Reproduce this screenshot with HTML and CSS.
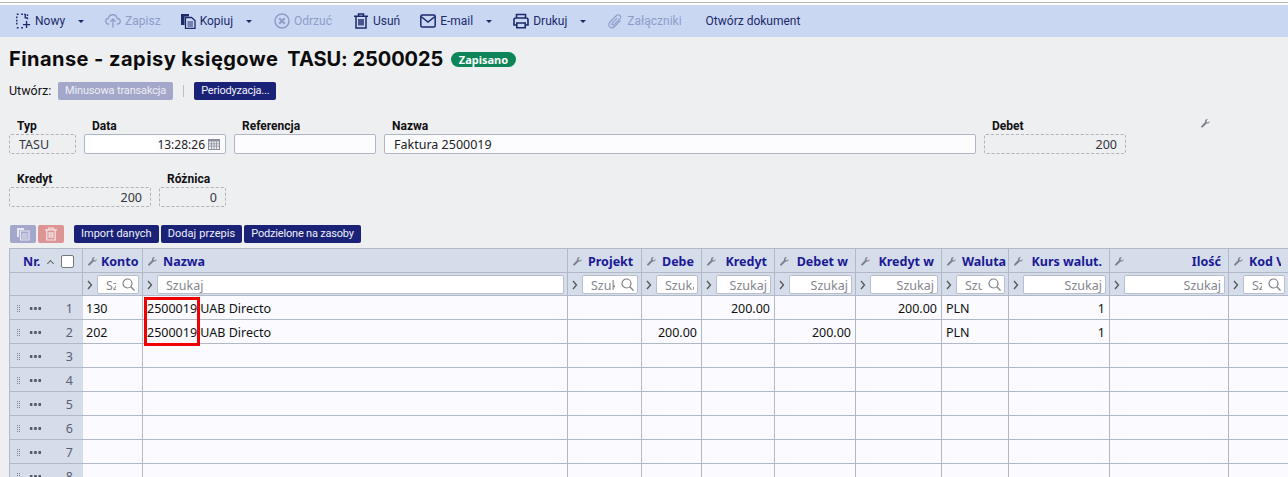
FILE: index.html
```html
<!DOCTYPE html>
<html lang="pl">
<head>
<meta charset="utf-8">
<title>Finanse - zapisy księgowe</title>
<link rel="stylesheet" href="styles.css">
</head>
<body>
<svg class="defs" width="0" height="0" aria-hidden="true">
  <symbol id="wrench" viewBox="0 0 10 10"><path d="M9.600 2.100 7.900 3.800 6.400 3.500 6.100 2 7.800.4C6.500-.1 5 .4 4.600 1.600c-.2.600-.2 1.100 0 1.600L.4 7.700c-.5.5-.5 1.200 0 1.600.4.5 1.100.5 1.600 0l4.200-4.300c1.700.5 3.700-.9 3.400-2.900z"/></symbol>
  <symbol id="chev" viewBox="0 0 6 10"><path d="M1 1l3.500 4L1 9" fill="none" stroke="currentColor" stroke-width="1.300"/></symbol>
</svg>

<div class="topline"></div>
<nav class="toolbar">
  <span class="tool"><svg class="ic" viewBox="0 0 16 18"><path d="M6 1.500h4.500M1 1.500h2M1 4v10M1 16.500h2M6 16.500h3M13 1.500V7" fill="none" stroke="currentColor" stroke-width="1.600" stroke-dasharray="2 1.500"/><path d="M10.500 1v4.500H13M12 9v8M8 13h8" fill="none" stroke="currentColor" stroke-width="1.500"/></svg>Nowy</span>
  <span class="caret"></span>
  <span class="tool off"><svg class="ic" viewBox="0 0 18 16"><path d="M5 11.500H4C2 11.500.8 10 .8 8.300c0-1.600 1.200-3 2.800-3.100C4.200 2.800 6.200 1 8.700 1c2.600 0 4.600 1.800 5 4.200 1.900 0 3.500 1.400 3.500 3.200 0 1.700-1.300 3.100-3.200 3.100H13" fill="none" stroke="currentColor" stroke-width="1.500"/><path d="M9 15.500V6M5.800 9 9 5.800 12.200 9" fill="none" stroke="currentColor" stroke-width="1.500"/></svg>Zapisz</span>
  <span class="tool gap-l"><svg class="ic" viewBox="0 0 16 16"><path d="M1 1h8v2.500H4.500V12H1z" fill="currentColor"/><path d="M5.500 4.500h6l3.500 3V15.500H5.500z" fill="#c9d7f3" stroke="currentColor" stroke-width="1.300"/><path d="M7.500 9h5.500M7.500 11h5.500M7.500 13h5.500" stroke="currentColor" stroke-width="1.200"/></svg>Kopiuj</span>
  <span class="caret"></span>
  <span class="tool off nudge"><svg class="ic" viewBox="0 0 16 16"><circle cx="8" cy="8" r="7" fill="none" stroke="currentColor" stroke-width="1.500"/><path d="M5.200 5.200l5.600 5.600M10.800 5.200l-5.600 5.600" stroke="currentColor" stroke-width="2"/></svg>Odrzuć</span>
  <span class="tool gap-m"><svg class="ic" viewBox="0 0 16 16"><path d="M1 3.200h14M5.500 3V1h5v2M3 3.500V15h10V3.500M6 6v6.500M8 6v6.500M10 6v6.500" fill="none" stroke="currentColor" stroke-width="1.500"/></svg>Usuń</span>
  <span class="tool gap-s"><svg class="ic" viewBox="0 0 16 14"><rect x=".8" y="1" width="14.400" height="12" rx="1.500" fill="none" stroke="currentColor" stroke-width="1.500"/><path d="M1 2.500 8 8l7-5.500" fill="none" stroke="currentColor" stroke-width="1.500"/></svg>E-mail</span>
  <span class="caret"></span>
  <span class="tool"><svg class="ic" viewBox="0 0 16 16"><path d="M3.500 5V1.500h9V5M3.500 12H1V6.800C1 5.800 1.800 5 2.800 5h10.400c1 0 1.800.8 1.800 1.800V12h-2.500" fill="none" stroke="currentColor" stroke-width="1.600"/><path d="M3.800 10h8.400v4.800H3.800z" fill="none" stroke="currentColor" stroke-width="1.600"/></svg>Drukuj</span>
  <span class="caret"></span>
  <span class="tool off"><svg class="ic" viewBox="0 0 16 16"><path d="M13.500 7.500 7.500 13.500c-1.500 1.500-3.600 1.500-4.800.3s-1.200-3.300.3-4.800l6.500-6.500c1-1 2.500-1 3.400-.1s.9 2.400-.1 3.400l-6 6c-.5.500-1.200.5-1.700.1s-.4-1.200.1-1.700l5-5" fill="none" stroke="currentColor" stroke-width="1.200"/></svg>Załączniki</span>
  <span class="tool plain">Otwórz dokument</span>
</nav>

<main class="page">
  <header class="title-row">
    <h1 class="title">Finanse - zapisy księgowe</h1>
    <span class="doc">TASU: 2500025</span>
    <span class="badge">Zapisano</span>
  </header>

  <div class="create-row">
    <span class="create-label">Utwórz:</span>
    <button class="btn btn-off" type="button">Minusowa transakcja</button>
    <span class="sep"></span>
    <button class="btn squeeze" type="button">Periodyzacja...</button>
  </div>

  <section class="form-row">
    <div class="field f-typ"><label>Typ</label><div class="ro">TASU</div></div>
    <div class="field f-wide"><label>Data</label><div class="inp date"><span class="mask"></span><span class="time">13:28:26</span><svg class="cal" viewBox="0 0 12 12"><path d="M0 1h12v11H0z" fill="#8b8f9c"/><path d="M1 3.500h10V11H1z" fill="#eef0f5"/><path d="M1 5.800h10M1 8.200h10M3.500 3.500V11M6 3.500V11M8.500 3.500V11" stroke="#8b8f9c" stroke-width=".8"/></svg></div></div>
    <div class="field f-wide"><label>Referencja</label><div class="inp"></div></div>
    <div class="field f-name"><label>Nazwa</label><div class="inp">Faktura 2500019</div></div>
    <div class="field f-wide"><label>Debet</label><div class="ro right">200</div></div>
    <svg class="wrench w-form"><use href="#wrench"/></svg>
  </section>
  <section class="form-row row2">
    <div class="field f-wide"><label>Kredyt</label><div class="ro right">200</div></div>
    <div class="field f-typ"><label>Różnica</label><div class="ro right">0</div></div>
  </section>

  <div class="actions">
    <button class="sq sq-blue" type="button"><svg viewBox="0 0 14 14" width="14" height="14"><path d="M1 1h7v2H3v7H1z" fill="#e6e8f2"/><path d="M4.500 4h8.500v9H4.500z" fill="none" stroke="#e6e8f2" stroke-width="1.200"/><path d="M6 7h5.500M6 9h5.500M6 11h5.500" stroke="#e6e8f2"/></svg></button>
    <button class="sq sq-red" type="button"><svg viewBox="0 0 14 14" width="14" height="14"><path d="M1 2.800h12M4.800 2.600V1h4.400v1.600M2.800 3v10h8.400V3M5.200 5v6M7 5v6M8.800 5v6" fill="none" stroke="#f6e6e6" stroke-width="1.200"/></svg></button>
    <button class="btn first" type="button">Import danych</button>
    <button class="btn widen" type="button">Dodaj przepis</button>
    <button class="btn squeeze" type="button">Podzielone na zasoby</button>
  </div>

  <div class="grid-wrap">
    <table class="grid">
      <colgroup>
        <col class="c-nr"><col class="c-konto"><col class="c-nazwa"><col class="c-proj"><col class="c-deb"><col class="c-kre"><col class="c-debw"><col class="c-krew"><col class="c-wal"><col class="c-kurs"><col class="c-ilo"><col class="c-kod">
      </colgroup>
      <thead>
        <tr class="hd">
          <th><div class="nrh"><span class="nr-t">Nr.</span><span class="sort"></span><span class="check"></span></div></th>
          <th><div class="h tight"><svg class="wrench"><use href="#wrench"/></svg><span>Konto</span></div></th>
          <th><div class="h"><svg class="wrench"><use href="#wrench"/></svg><span>Nazwa</span></div></th>
          <th><div class="h"><svg class="wrench"><use href="#wrench"/></svg><span>Projekt</span></div></th>
          <th><div class="h"><svg class="wrench"><use href="#wrench"/></svg><span class="clip">Debet</span></div></th>
          <th><div class="h r"><svg class="wrench"><use href="#wrench"/></svg><span>Kredyt</span></div></th>
          <th><div class="h r"><svg class="wrench"><use href="#wrench"/></svg><span>Debet w</span></div></th>
          <th><div class="h r"><svg class="wrench"><use href="#wrench"/></svg><span>Kredyt w</span></div></th>
          <th><div class="h"><svg class="wrench"><use href="#wrench"/></svg><span>Waluta</span></div></th>
          <th><div class="h r"><svg class="wrench"><use href="#wrench"/></svg><span>Kurs walut.</span></div></th>
          <th><div class="h r"><svg class="wrench"><use href="#wrench"/></svg><span>Ilość</span></div></th>
          <th><div class="h"><svg class="wrench"><use href="#wrench"/></svg><span class="clip">Kod VAT</span></div></th>
        </tr>
        <tr class="flt">
          <th></th>
          <th><div class="f"><svg class="chev"><use href="#chev"/></svg><div class="s ico"><input placeholder="Szukaj"><svg class="mag" viewBox="0 0 13 13"><circle cx="5.500" cy="5.500" r="4.500" fill="none" stroke="currentColor" stroke-width="1.200"/><path d="M8.800 8.800 12.500 12.500" stroke="currentColor" stroke-width="1.300"/></svg></div></div></th>
          <th><div class="f"><svg class="chev"><use href="#chev"/></svg><div class="s"><input placeholder="Szukaj"></div></div></th>
          <th><div class="f"><svg class="chev"><use href="#chev"/></svg><div class="s ico"><input placeholder="Szukaj"><svg class="mag" viewBox="0 0 13 13"><circle cx="5.500" cy="5.500" r="4.500" fill="none" stroke="currentColor" stroke-width="1.200"/><path d="M8.800 8.800 12.500 12.500" stroke="currentColor" stroke-width="1.300"/></svg></div></div></th>
          <th><div class="f"><svg class="chev"><use href="#chev"/></svg><div class="s"><input placeholder="Szukaj"></div></div></th>
          <th><div class="f"><svg class="chev"><use href="#chev"/></svg><div class="s rt"><input placeholder="Szukaj"></div></div></th>
          <th><div class="f"><svg class="chev"><use href="#chev"/></svg><div class="s rt"><input placeholder="Szukaj"></div></div></th>
          <th><div class="f"><svg class="chev"><use href="#chev"/></svg><div class="s rt"><input placeholder="Szukaj"></div></div></th>
          <th><div class="f"><svg class="chev"><use href="#chev"/></svg><div class="s ico"><input placeholder="Szukaj"><svg class="mag" viewBox="0 0 13 13"><circle cx="5.500" cy="5.500" r="4.500" fill="none" stroke="currentColor" stroke-width="1.200"/><path d="M8.800 8.800 12.500 12.500" stroke="currentColor" stroke-width="1.300"/></svg></div></div></th>
          <th><div class="f"><svg class="chev"><use href="#chev"/></svg><div class="s rt"><input placeholder="Szukaj"></div></div></th>
          <th><div class="f"><svg class="chev"><use href="#chev"/></svg><div class="s rt"><input placeholder="Szukaj"></div></div></th>
          <th><div class="f"><svg class="chev"><use href="#chev"/></svg><div class="s ico"><input placeholder="Szukaj"><svg class="mag" viewBox="0 0 13 13"><circle cx="5.500" cy="5.500" r="4.500" fill="none" stroke="currentColor" stroke-width="1.200"/><path d="M8.800 8.800 12.500 12.500" stroke="currentColor" stroke-width="1.300"/></svg></div></div></th>
        </tr>
      </thead>
      <tbody>
        <tr><th class="n"><div class="nrc"><i class="drag"></i><i class="dots"></i><b>1</b></div></th><td>130</td><td>2500019 UAB Directo</td><td></td><td></td><td class="num">200.00</td><td></td><td class="num">200.00</td><td>PLN</td><td class="num">1</td><td></td><td></td></tr>
        <tr><th class="n"><div class="nrc"><i class="drag"></i><i class="dots"></i><b>2</b></div></th><td>202</td><td>2500019 UAB Directo</td><td></td><td class="num">200.00</td><td></td><td class="num">200.00</td><td></td><td>PLN</td><td class="num">1</td><td></td><td></td></tr>
        <tr><th class="n"><div class="nrc"><i class="drag"></i><i class="dots"></i><b>3</b></div></th><td></td><td></td><td></td><td></td><td></td><td></td><td></td><td></td><td></td><td></td><td></td></tr>
        <tr><th class="n"><div class="nrc"><i class="drag"></i><i class="dots"></i><b>4</b></div></th><td></td><td></td><td></td><td></td><td></td><td></td><td></td><td></td><td></td><td></td><td></td></tr>
        <tr><th class="n"><div class="nrc"><i class="drag"></i><i class="dots"></i><b>5</b></div></th><td></td><td></td><td></td><td></td><td></td><td></td><td></td><td></td><td></td><td></td><td></td></tr>
        <tr><th class="n"><div class="nrc"><i class="drag"></i><i class="dots"></i><b>6</b></div></th><td></td><td></td><td></td><td></td><td></td><td></td><td></td><td></td><td></td><td></td><td></td></tr>
        <tr><th class="n"><div class="nrc"><i class="drag"></i><i class="dots"></i><b>7</b></div></th><td></td><td></td><td></td><td></td><td></td><td></td><td></td><td></td><td></td><td></td><td></td></tr>
        <tr><th class="n"><div class="nrc"><i class="drag"></i><i class="dots"></i><b>8</b></div></th><td></td><td></td><td></td><td></td><td></td><td></td><td></td><td></td><td></td><td></td><td></td></tr>
      </tbody>
    </table>
    <div class="redbox"></div>
  </div>
</main>
</body>
</html>
```

FILE: styles.css
```css
* { box-sizing: border-box; }
html, body { margin: 0; height: 477px; overflow: hidden; }
body { background: #eeeff1; color: #111; font: 12.5px/16px "Noto Sans", "Open Sans", sans-serif; }
.defs { position: absolute; }
button { font: inherit; border: 0; cursor: pointer; }

.topline { height: 5px; background: #fff; border-top: 2px solid #fff; }
.topline::before { content: ""; display: block; height: 1px; background: #b8b8b8; }

.toolbar { height: 32px; background: #c9d7f3; display: flex; align-items: center; padding-left: 15px; color: #1c2a6b; font: 12px/16px Roboto, "Noto Sans", sans-serif; }
.tool { display: inline-flex; align-items: center; gap: 4px; white-space: nowrap; }
.ic { width: 16px; height: 16px; flex: none; }
.off { color: #8f9dc9; }
.caret { width: 0; height: 0; border: 3px solid transparent; border-top: 3px solid #1c2a6b; border-bottom: 0; margin: 0 21px 0 13px; }
.gap-l { margin-left: 19px; }
.gap-m { margin-left: 21px; }
.gap-s { margin-left: 20px; }
.nudge { margin-left: 1px; }
.plain { margin-left: 24px; }

.page { padding: 0 0 0 9px; }
.title-row { display: flex; align-items: center; height: 30px; margin-top: 7px; }
.title, .doc { margin: 0; font: 700 20px/30px Inter, "Liberation Sans", sans-serif; letter-spacing: .45px; color: #0c0c0c; }
.doc { margin-left: 9px; letter-spacing: -.05px; }
.badge { margin-left: 8px; height: 15px; padding: 0 7.500px; border-radius: 8px; background: #0d8559; color: #fff; font: 700 11px/15px "Noto Sans", sans-serif; }

.create-row { display: flex; align-items: center; height: 18px; margin-top: 8px; }
.create-label { width: 49px; font: 12.500px/16px Roboto, sans-serif; }
.btn { height: 18px; padding: 0 7px; border-radius: 2px; background: #1a2277; color: #eef0fa; font: 11px/18px Roboto, sans-serif; white-space: nowrap; }
.btn-off { background: #a3a7c9; color: #eceef6; letter-spacing: -.15px; }
.squeeze { letter-spacing: -.2px; }
.widen { letter-spacing: .08px; }
.sep { width: 1px; height: 12px; margin: 0 10px; background: #b5c0cc; }

.form-row { display: flex; gap: 8px; margin-top: 19px; position: relative; }
.row2 { margin-top: 18px; }
.field { display: flex; flex-direction: column; }
.field label { height: 15px; padding-left: 8px; font: 700 12px/15px Roboto, sans-serif; color: #111; }
.f-typ { width: 67px; }
.f-wide { width: 142px; }
.f-name { width: 592px; }
.ro, .inp { height: 20px; padding: 0 9px; line-height: 19px; }
.ro { border: 1px dashed #b1b4bc; border-radius: 2px; color: #33363f; }
.right { text-align: right; padding-right: 8px; }
.inp { border: 1px solid #aeb5c6; border-radius: 2px; background: #fcfcff; color: #222; }
.date { display: flex; justify-content: flex-end; align-items: center; padding-right: 5px; gap: 3px; position: relative; }
.time { font-size: 12px; }
.mask { position: absolute; left: 7px; top: 1px; width: 64px; height: 16px; background: #fff; }
.cal { width: 12px; height: 12px; }
.wrench { width: 9px; height: 9px; fill: #7d808c; flex: none; }
.w-form { position: absolute; left: 1192px; top: 0; }

.actions { display: flex; gap: 2px; margin-top: 18px; height: 18px; margin-left: 1px; }
.sq { width: 26px; height: 18px; padding: 2px 0 0; border-radius: 2px; }
.sq-blue { background: #a3a7c9; }
.sq-red { background: #dc9494; }
.first { margin-left: 8px; }

.grid-wrap { position: relative; margin-top: 5px; width: 1279px; }
.grid { border-collapse: collapse; table-layout: fixed; width: 1279px; }
.c-nr { width: 73px; } .c-konto { width: 60px; } .c-nazwa { width: 425px; } .c-proj { width: 74px; }
.c-deb { width: 60px; } .c-kre { width: 73px; } .c-debw { width: 81px; } .c-krew { width: 86px; }
.c-wal { width: 67px; } .c-kurs { width: 101px; } .c-ilo { width: 119px; } .c-kod { width: 60px; }
.grid th, .grid td { border: 1px solid #b2b9c6; padding: 0; overflow: hidden; white-space: nowrap; }
.grid thead th { background: #d5dcea; }
.hd th { height: 24px; padding-top: 2px; }
.flt th { height: 23px; padding-top: 1px; }
.grid tbody tr { height: 24px; }
.grid td { background: #fbfbff; padding: 2px 4px 0; color: #111; line-height: 21px; }
.grid td:nth-child(2) { padding-left: 3px; }
.grid td.num { text-align: right; }
.grid th.n { background: #d5dcea; border-left-color: #b2b9c6; border-right-color: #d5dcea; font-weight: 400; padding-top: 2px; }

.nrh { display: flex; align-items: center; height: 21px; padding-left: 13px; color: #1a1a96; font-weight: 700; font-size: 12.5px; }
.nr-t { width: 18px; text-align: left; }
.sort { width: 5px; height: 5px; border-left: 1px solid #666; border-top: 1px solid #666; transform: rotate(45deg); margin-top: 3px; margin-left: 7px; }
.check { width: 13px; height: 13px; margin-left: 8px; background: #fff; border: 1px solid #777; border-radius: 2px; }
.h { display: flex; align-items: center; gap: 6px; padding-left: 5px; overflow: hidden; color: #1a1a96; font-size: 12.5px; font-weight: 700; line-height: 21px; text-align: left; }
.h.tight { gap: 4px; }
.h.r { justify-content: space-between; padding-right: 7px; gap: 2px; }
.h span { flex: none; }
.h .clip { width: 32px; overflow: hidden; }
.f { display: flex; align-items: center; padding: 0 3px 0 4px; gap: 4px; }
.chev { width: 6px; height: 10px; flex: none; color: #555; }
.s { flex: 1; min-width: 0; height: 19px; position: relative; display: flex; background: #fff; border: 1px solid #b8bfce; border-radius: 2px; overflow: hidden; }
.s input { width: 100%; min-width: 0; border: 0; background: transparent; padding: 1px 3px 0 8px; font: 12.5px "Noto Sans", sans-serif; outline: 0; }
.s input::placeholder { color: #85868f; opacity: 1; }
.s.ico input { padding-right: 22px; }
.s.rt input { text-align: right; }
.mag { position: absolute; right: 3px; top: 2px; width: 13px; height: 13px; color: #7f8088; }

.nrc { display: flex; align-items: center; height: 21px; padding: 0 9px 0 7px; color: #5a6172; }
.nrc b { font-weight: 400; margin-left: auto; }
.drag { width: 3px; height: 8px; background-image: repeating-linear-gradient(0deg, #d5dcea 0 1px, transparent 1px 2px), repeating-linear-gradient(90deg, #7f828c 0 1px, transparent 1px 2px); }
.dots { width: 13px; height: 3px; margin-left: 9px; background-image: radial-gradient(circle, #555864 1.300px, transparent 1.500px); background-size: 4.300px 3px; }

.redbox { position: absolute; left: 135px; top: 49px; width: 56px; height: 49px; border: 3px solid #f00000; }
```
